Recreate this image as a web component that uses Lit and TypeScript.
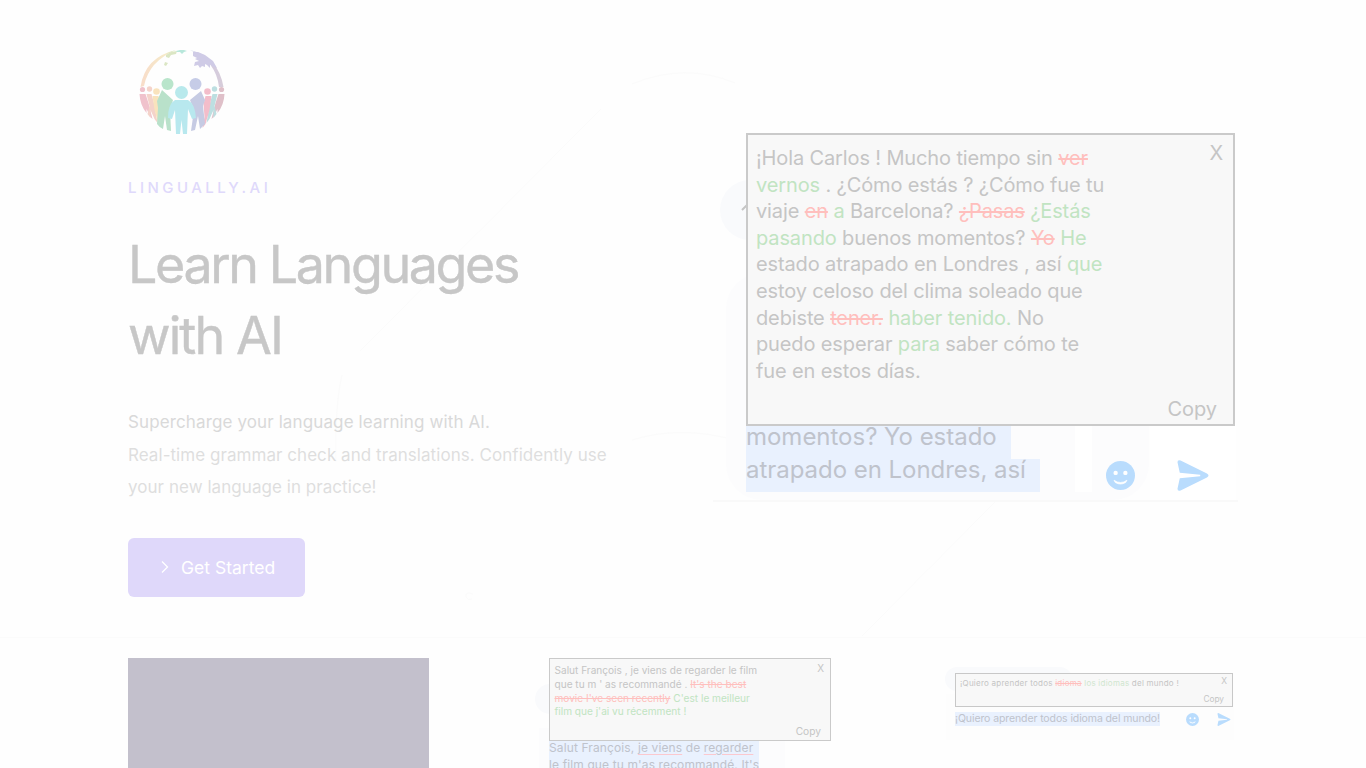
import { LitElement, html, svg, css } from "lit";
import { customElement } from "lit/decorators.js";

const smile = html`<svg viewBox="0 0 28 28"><circle cx="14" cy="14" r="14" fill="currentColor"/><circle cx="9.3" cy="11.5" r="2.1" fill="#fff"/><circle cx="18.7" cy="11.5" r="2.1" fill="#fff"/><path d="M7.7 18.5q6.3 4.500 12.6 0l-1.2 2.200q-5.1 3.200-10.2 0z" fill="#fff" stroke="#fff" stroke-width=".6" stroke-linejoin="round"/></svg>`;
const send = html`<svg viewBox="0 0 30 30"><path d="M0 2.200Q0-.6 3 .6L28.500 13q3 2 0 4L3 29.400q-3 1.200-3-1.600l2.200-10.200L22 15.700V14.300L2.200 12.400z" fill="currentColor"/></svg>`;

@customElement("brand-logo")
export class BrandLogo extends LitElement {
  static styles = css`:host{display:block;width:86px;height:86px}svg{display:block;width:100%;height:100%}`;
  side(colors: string[]) {
    return svg`
      <circle cx="3.500" cy="40.5" r="2.6" fill=${colors[0]}/>
      <circle cx="10.500" cy="40" r="2.7" fill=${colors[1]}/>
      <circle cx="17.5" cy="42.5" r="3.3" fill=${colors[2]}/>
      <path d="M.5 45h6l3 9 4 16-2-2-4-8v4Q1 56 .5 45z" fill=${colors[0]}/>
      <path d="M7.500 45h5l3 11 3 18-3-4-4-9v8l-3-4 2-8z" fill=${colors[1]}/>
      <path d="M13.500 47h6l2 8-1 13 2 11-3-4-4-14z" fill=${colors[2]}/>`;
  }
  render() {
    return html`<svg viewBox="0 0 86 86">
      <defs><linearGradient id="rim" x1="0" x2="1"><stop offset="0" stop-color="#f8dcc9"/><stop offset=".3" stop-color="#f6eac9"/><stop offset=".4" stop-color="#d8e6b9"/><stop offset=".5" stop-color="#bce8df"/><stop offset=".68" stop-color="#d2cbe7"/><stop offset="1" stop-color="#d7cdd9"/></linearGradient></defs>
      <path d="M1.500 38Q6 8 37 1Q10 12 5 37zM51 1Q79 7 84.500 38L80 38Q77 12 51 1z" fill="url(#rim)"/>
      <path d="M27 6l5-3 6-1-1 3-5 1-2 3-3-1zM26 13l3 1-2 3-2-1z" fill="#dbe6c4"/>
      <path d="M37 2l4-1h4l3 1-3 1-2 2-2-2h-3z" fill="#b8e7db"/>
      <path d="M54 3l5 0 7 3 8 6 4 7-5-2-2-2 0 4-3-3-2-1 0 3-3-1-2 2-2-3-4 1 1-4 4-1-4-2 2-1-4-2z" fill="#cfcbe6"/>
      ${this.side(["#f0c2cc", "#f4d3ca", "#f9e3bd"])}
      <g transform="translate(86 0) scale(-1 1)">${this.side(["#dfc0c9", "#bddfe1", "#f3bdca"])}</g>
      <circle cx="28.500" cy="35" r="6" fill="#b9e5cb"/>
      <path d="M23 41l11 10-3 10 1 21-4-1-2-14-2 13q-4-2-6-5l1-16-1-7z" fill="#b9e1ca"/>
      <circle cx="56.500" cy="35" r="6" fill="#c6cce7"/>
      <path d="M62 42l-11 9 4 10-3 21 4-1 3-14 2 13 5-5-2-18 2-6z" fill="#c6cbe3"/>
      <circle cx="42.500" cy="43.500" r="6.500" fill="#b8e9ec"/>
      <path d="M36 51h13q7 4 8 18l-4 1-4-10-1 25h-4l-1.500-14L41 85h-4l-1-24-3 9-4-1q0-14 7-18z" fill="#b8e8ee"/>
    </svg>`;
  }
}

@customElement("chat-shot")
export class ChatShot extends LitElement {
  static properties = { kind: {} };
  declare kind: string;
  static styles = css`
    :host { display: block; position: relative; }
    svg { display: block; width: 100%; height: 100%; }
    .shot { position: relative; box-sizing: border-box; }
    .pop { position: relative; box-sizing: border-box; background: #f8f8f8; border: 2px solid #cacaca; color: #c5c5c5; white-space: nowrap; }
    .l { display: block; width: max-content; }
    .g { color: #c1e4c2; }
    .r { color: #ffbfbd; text-decoration: line-through; }
    .x, .copy, .bubble, .avatar, .arrow, .side, .gap { position: absolute; }
    .sel { background: #e9f1fe; white-space: nowrap; color: #bfc3cc; width: max-content; }
    .icon { color: #b9dcfd; }

    .hero { width: 525px; height: 369px; padding: 0 3px 0 33px; border-bottom: 2px solid #f9f9f9; }
    .hero .pop { height: 293px; padding: 10px 8px; font-size: 20px; line-height: 26.600px; letter-spacing: -.13px; }
    .hero .x { top: 5px; right: 10px; font-size: 20px; }
    .hero .copy { right: 16px; bottom: 1px; letter-spacing: -.05px; }
    .hero .avatar { left: 7px; top: 47px; width: 60px; height: 60px; border-radius: 50%; background: #f9fafc; }
    .hero .arrow { left: 28px; top: 71px; width: 8px; height: 7px; color: #c5c5c5; }
    .hero .bubble { left: 13px; top: 140px; right: 89px; bottom: 0; border-radius: 36px; background: #fcfcfd; }
    .hero .side { right: 2px; top: 290px; width: 86px; bottom: 0; background: #fff; }
    .hero .gap { left: 362px; top: 290px; width: 17px; height: 69px; background: #fff; }
    .hero .foot { display: grid; grid-template-columns: 360px 29px 42px 32px; position: relative; }
    .hero .sel { font-size: 24px; height: 33px; line-height: 22px; padding-right: 14px; letter-spacing: -.02px; }
    .hero .sel + .sel { letter-spacing: -.04px; }
    .hero .icon { margin-top: 35px; height: 29px; }
    .hero .send { grid-column: 4; margin-top: 34px; height: 31px; }

    .fr { width: 302px; height: 110px; padding: 0 4px 0 15px; overflow: hidden; }
    .fr .pop { width: 282px; height: 83px; padding: 5px 4.500px; font-size: 10.100px; line-height: 13.800px; border-width: 1.500px; letter-spacing: 0; }
    .fr .x { top: 3px; right: 6px; font-size: 10px; }
    .fr .copy { right: 9px; bottom: 1px; font-size: 10.200px; }
    .fr .avatar { left: 1px; top: 26px; width: 30px; height: 30px; border-radius: 50%; background: #f9fafc; }
    .fr .bubble { left: 5px; top: 70px; width: 246px; height: 80px; background: #fcfcfd; }
    .fr .sel { position: relative; font-size: 12px; line-height: 13px; height: 17px; letter-spacing: .12px; padding-right: 6px; }
    .fr .sel + .sel { padding-right: 0; }
    .u { text-decoration: underline; text-decoration-color: #fbc8ce; text-underline-offset: 2px; }

    .es { width: 300px; height: 84px; padding: 15px 7px 0 15px; }
    .es .pop { height: 34px; padding: 0 4px; border: 1px solid #c8c8c8; font-size: 8px; line-height: 18px; letter-spacing: .24px; }
    .es .g { color: #d0e6cf; }
    .es .x { top: -2px; right: 5px; font-size: 8.500px; letter-spacing: 0; }
    .es .copy { right: 8px; bottom: -2px; font-size: 8.300px; letter-spacing: 0; }
    .es .avatar { left: 5px; top: 9px; width: 127px; height: 24px; border-radius: 12px; background: #f9fafc; }
    .es .bubble { left: 6px; top: 36px; right: 6px; height: 46px; background: #fdfdfd; }
    .es .foot { position: relative; display: flex; align-items: center; padding-top: 5px; }
    .es .sel { font-size: 10.500px; line-height: 14px; letter-spacing: -.1px; }
    .es .icon { width: 13px; height: 13px; margin-left: 26px; }
    .es .send { width: 14px; margin-left: 18px; }
  `;
  render() {
    if (this.kind === "fr") return html`<div class="shot fr"><div class="avatar"></div><div class="bubble"></div>
      <div class="pop"><span class="l">Salut François , je viens de regarder le film</span><span class="l">que tu m ' as recommandé . <span class="r">It's the best</span></span><span class="l"><span class="r">movie I've seen recently</span> <span class="g">C'est le meilleur</span></span><span class="l g">film que j'ai vu récemment !</span><span class="x">X</span><span class="copy">Copy</span></div>
      <div class="sel">Salut François, <span class="u">je viens</span> de <span class="u">regarder</span></div><div class="sel">le film que tu m'as recommandé. It's</div></div>`;
    if (this.kind === "es") return html`<div class="shot es"><div class="avatar"></div><div class="bubble"></div>
      <div class="pop"><span class="l">¡Quiero aprender todos <span class="r">idioma</span> <span class="g">los idiomas</span> del mundo !</span><span class="x">X</span><span class="copy">Copy</span></div>
      <div class="foot"><div class="sel">¡Quiero aprender todos idioma del mundo!</div><div class="icon">${smile}</div><div class="icon send">${send}</div></div></div>`;
    return html`<div class="shot hero"><div class="avatar"></div><div class="bubble"></div><div class="side"></div><div class="gap"></div>
      <div class="arrow"><svg viewBox="0 0 8 7"><path d="M1 6l5-5 2 1" fill="none" stroke="currentColor" stroke-width="2"/></svg></div>
      <div class="pop">
        <span class="l">¡Hola Carlos ! Mucho tiempo sin <span class="r">ver</span></span>
        <span class="l"><span class="g">vernos</span> . ¿Cómo estás ? ¿Cómo fue tu</span>
        <span class="l">viaje <span class="r">en</span> <span class="g">a</span> Barcelona? <span class="r">¿Pasas</span> <span class="g">¿Estás</span></span>
        <span class="l"><span class="g">pasando</span> buenos momentos? <span class="r">Yo</span> <span class="g">He</span></span>
        <span class="l">estado atrapado en Londres , así <span class="g">que</span></span>
        <span class="l">estoy celoso del clima soleado que</span>
        <span class="l">debiste <span class="r">tener.</span> <span class="g">haber tenido.</span> No</span>
        <span class="l">puedo esperar <span class="g">para</span> saber cómo te</span>
        <span class="l">fue en estos días.</span>
        <span class="x">X</span><span class="copy">Copy</span>
      </div>
      <div class="foot"><div><div class="sel">momentos? Yo estado</div><div class="sel">atrapado en Londres, así</div></div><div class="icon smile">${smile}</div><div class="icon send">${send}</div></div>
    </div>`;
  }
}

@customElement("app-root")
export class AppRoot extends LitElement {
  static styles = css`
    :host { display: block; height: 768px; overflow: hidden; position: relative; background: #fefefe; font-family: Inter, sans-serif; }
    .lines { position: absolute; left: 0; top: 0; width: 1366px; height: 638px; }
    .hero { position: relative; box-sizing: border-box; height: 638px; border-bottom: 1px solid #fbfbfb; padding-left: 128px; display: grid; grid-template-columns: 585px 525px; }
    .copy { padding-top: 49px; }
    brand-logo { margin-left: 10.500px; }
    .name { margin: 43px 0 0; font-size: 15px; line-height: 20px; font-weight: 500; letter-spacing: 3.450px; color: #dfd9fb; }
    h1 { margin: 32px 0 0; font-size: 52px; line-height: 70.500px; font-weight: 400; letter-spacing: -2.400px; color: #c7c7c7; -webkit-text-stroke: .4px #c7c7c7; }
    h1 span { display: block; }
    h1 .second { letter-spacing: -1.900px; }
    .lead { margin: 35px 0 0; font-size: 17px; line-height: 32.500px; color: #dedede; white-space: nowrap; letter-spacing: .05px; }
    .lead span { display: block; }
    .lead .first { color: #d9d9d9; letter-spacing: .12px; }
    .btn { display: flex; align-items: center; box-sizing: border-box; width: 177px; height: 59px; margin-top: 34px; padding: 0 30px 0 31px; border: 0; border-radius: 6px; background: #dfd8fa; color: #fff; font: 400 17.500px Inter, sans-serif; white-space: nowrap; }
    .btn svg { width: 12px; height: 14px; margin-right: 10px; flex: none; }
    .visual { padding-top: 133px; }
    .tiles { position: relative; display: grid; grid-template-columns: 301px 301px 301px; column-gap: 105px; padding: 20px 0 0 128px; height: 110px; }
    .video { background: #c3c0cc; }
  `;
  render() {
    return html`
      <svg class="lines" viewBox="0 0 1366 638" fill="none" stroke="#fbfbfb"><path d="M632 84Q685 62 735 83M601 109L360 351M342 375Q337 395 336 430V462M632 440Q680 425 735 440M995 502L862 636"/><path d="M473 594q-8-3-7 3 2 4 6 2"/></svg>
      <section class="hero">
        <div class="copy">
          <brand-logo></brand-logo>
          <p class="name">LINGUALLY.AI</p>
          <h1><span>Learn Languages</span><span class="second">with AI</span></h1>
          <p class="lead"><span class="first">Supercharge your language learning with AI.</span><span>Real-time grammar check and translations. Confidently use</span><span>your new language in practice!</span></p>
          <button class="btn"><svg viewBox="0 0 12 14"><path d="M3 1.500L8.500 7 3 12.500" fill="none" stroke="#fff" stroke-width="1.300"/></svg>Get Started</button>
        </div>
        <div class="visual"><chat-shot></chat-shot></div>
      </section>
      <section class="tiles"><div class="video"></div><chat-shot kind="fr"></chat-shot><chat-shot kind="es"></chat-shot></section>`;
  }
}
